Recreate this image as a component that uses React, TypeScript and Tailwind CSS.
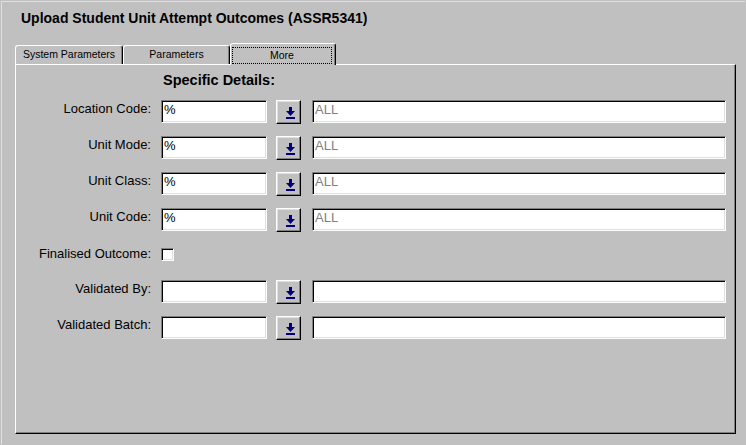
import React from "react";

const sunken =
  "border border-t-[#808080] border-l-[#808080] border-b-white border-r-white shadow-[inset_1px_1px_0_#000,inset_-1px_-1px_0_#dfdfdf] bg-white";

function LookupButton() {
  return (
    <div className="w-[25px] h-[24px] ml-[9px] border border-t-white border-l-white border-r-black border-b-black shadow-[inset_-1px_-1px_0_#808080,inset_1px_1px_0_#dfdfdf] pl-[9px] pt-[6px]">
      <svg width="9" height="12" viewBox="0 0 9 12" className="block">
        <rect x="3" y="0" width="3" height="4" fill="#000080" />
        <polygon points="0,4 9,4 4.5,9" fill="#000080" />
        <rect x="0" y="10" width="9" height="2" fill="#000080" />
      </svg>
    </div>
  );
}

function LookupRow({ label, code, desc }: { label: string; code: string; desc: string }) {
  return (
    <div className="flex items-start h-[23px]">
      <div className="w-[135px] text-right text-[13px] leading-[15px] pt-[1px]">{label}</div>
      <div className={`ml-[10px] w-[106px] h-[23px] pl-[2px] pt-px text-[13px] leading-[15px] ${sunken}`}>{code}</div>
      <LookupButton />
      <div className={`ml-[11px] w-[414px] h-[23px] pl-[2px] pt-px text-[13px] leading-[15px] text-[#808080] ${sunken}`}>
        {desc}
      </div>
    </div>
  );
}

function Tab({ label, width }: { label: string; width: string }) {
  return (
    <div
      className={`${width} h-[19px] border-l border-t border-r border-l-white border-t-white border-r-black shadow-[inset_-1px_0_0_#808080] rounded-t-[3px] flex items-center justify-center text-[10.5px]`}
    >
      {label}
    </div>
  );
}

export default function App() {
  return (
    <div className="w-[746px] h-[445px] bg-[#c0c0c0] p-px font-['Liberation_Sans',Arial,sans-serif] text-black overflow-hidden">
      <div className="h-full border-l border-t border-[#dfdfdf] flex flex-col">
        <h1 className="ml-[19px] mt-[8px] h-[16px] leading-[16px] text-[14px] font-bold">
          Upload Student Unit Attempt Outcomes (ASSR5341)
        </h1>

        {/* Tabs */}
        <div className="flex items-end ml-[13px] mt-[17px] h-[21px]">
          <Tab label="System Parameters" width="w-[108px]" />
          <Tab label="Parameters" width="w-[107px]" />
          <div className="relative z-10 -mb-px w-[106px] h-[22px] bg-[#c0c0c0] border-l border-t border-r border-l-white border-t-white border-r-black shadow-[inset_-1px_0_0_#808080] rounded-t-[3px]">
            <div className="mt-[3px] ml-px mr-[3px] h-[17px] border border-dotted border-black flex items-center justify-center text-[10.5px]">
              More
            </div>
          </div>
        </div>

        {/* Panel */}
        <div className="ml-[13px] w-[721px] h-[370px] border border-t-white border-l-white border-r-black border-b-black shadow-[inset_-1px_-1px_0_#808080] flex flex-col">
          <div className="mt-[7px] pl-[147px] text-[14.5px] leading-[17px] font-bold">Specific Details:</div>
          <div className="mt-[11px] flex flex-col gap-[13px]">
            <LookupRow label="Location Code:" code="%" desc="ALL" />
            <LookupRow label="Unit Mode:" code="%" desc="ALL" />
            <LookupRow label="Unit Class:" code="%" desc="ALL" />
            <LookupRow label="Unit Code:" code="%" desc="ALL" />
            <div className="flex items-start h-[23px]">
              <div className="w-[135px] text-right text-[13px] leading-[15px] pt-[2px]">Finalised Outcome:</div>
              <div className={`ml-[10px] mt-[4px] w-[13px] h-[13px] ${sunken}`} />
            </div>
            <LookupRow label="Validated By:" code="" desc="" />
            <LookupRow label="Validated Batch:" code="" desc="" />
          </div>
        </div>
      </div>
    </div>
  );
}
